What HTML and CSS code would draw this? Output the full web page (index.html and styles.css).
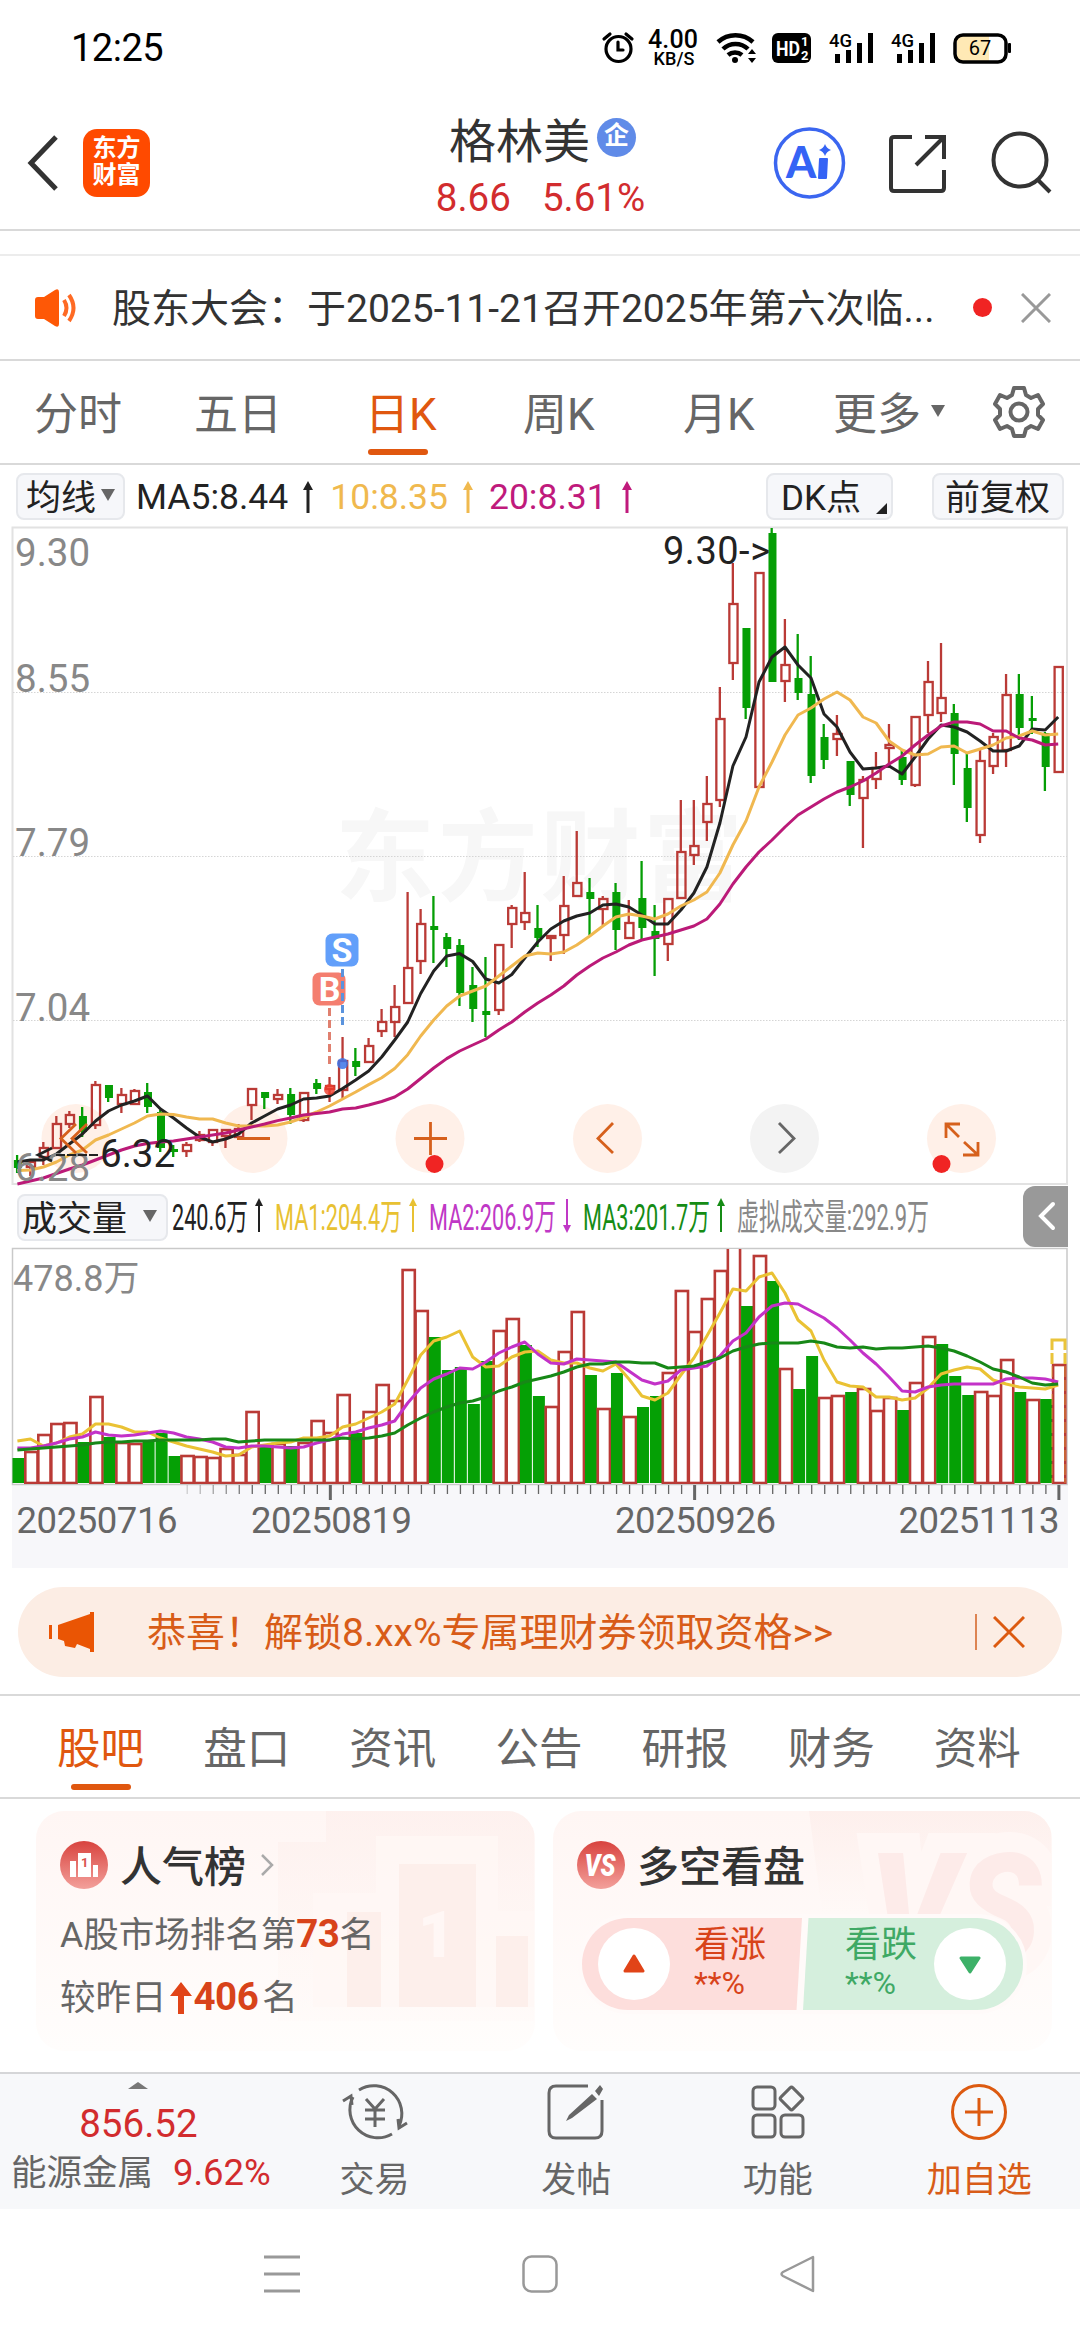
FILE: index.html
```html
<!DOCTYPE html>
<html lang="zh-CN">
<head>
  <meta charset="UTF-8" />
  <meta name="viewport" content="width=device-width, initial-scale=1.0" />
  <title>格林美 - 东方财富</title>
  <link rel="stylesheet" href="styles.css">
</head>
<body>
  <div class="status-bar">
    <span class="clock">12:25</span>
    <svg class="status-icons" width="420" height="50" viewBox="596 24 420 50">
      <g fill="none" stroke="#000" stroke-width="3.2" stroke-linecap="round">
        <circle cx="618.500" cy="49" r="12.5"/>
        <path d="M618 42v8h5M604 39l6-5M632 39l-6-5"/>
      </g>
      <text x="673" y="48" font-size="25" font-weight="500" text-anchor="middle" textLength="50">4.00</text>
      <text x="674" y="65" font-size="18" font-weight="500" text-anchor="middle" textLength="41">KB/S</text>
      <g fill="none" stroke="#000" stroke-width="4.5">
        <path d="M718 42a26 26 0 0 1 35 0M723 49a18 18 0 0 1 25 0M728 55a11 11 0 0 1 14 0"/>
      </g>
      <circle cx="735" cy="60" r="3"/>
      <path d="M748 54l4-5 4 5zM748 58l4 5 4-5z"/>
      <rect x="772" y="33" width="39" height="30" rx="6"/>
      <text x="776" y="56" font-size="21" font-weight="700" fill="#fff" textLength="24" lengthAdjust="spacingAndGlyphs">HD</text>
      <text x="801" y="46" font-size="13" font-weight="700" fill="#fff">1</text>
      <text x="801" y="60" font-size="13" font-weight="700" fill="#fff">2</text>
      <text x="829" y="47" font-size="18" font-weight="500" textLength="23" lengthAdjust="spacingAndGlyphs">4G</text>
      <path d="M835 54h5v9h-5zM846 50h5v13h-5zM857 43h5v20h-5zM868 33h5v30h-5z"/>
      <text x="891" y="47" font-size="18" font-weight="500" textLength="23" lengthAdjust="spacingAndGlyphs">4G</text>
      <path d="M897 54h5v9h-5zM908 50h5v13h-5zM919 43h5v20h-5zM930 33h5v30h-5z"/>
      <path d="M957 36h32v25h-32z" fill="#ffe9b5"/>
      <rect x="955" y="35" width="51" height="27" rx="8" fill="none" stroke="#000" stroke-width="3.5"/>
      <rect x="1008" y="43" width="3" height="10" rx="1"/>
      <text x="980" y="55" font-size="20" text-anchor="middle">67</text>
    </svg>
  </div>

  <header class="header">
    <svg class="back" width="34" height="58" viewBox="0 0 34 58"><path d="M30 3L5 29l25 26" fill="none" stroke="#333" stroke-width="5"/></svg>
    <div class="logo">东方<br>财富</div>
    <div class="stock">
      <div class="stock-name">格林美<span class="badge">企</span></div>
      <div class="stock-price"><span>8.66</span><span>5.61%</span></div>
    </div>
    <svg class="header-icons" width="290" height="80" viewBox="768 123 290 80">
      <circle cx="808.500" cy="163" r="34" fill="none" stroke="#3b66f0" stroke-width="3.500"/>
      <text x="785" y="178" font-family="Lato" font-size="43" font-weight="900" fill="#3563f5">A</text>
      <path d="M819 159h7l-1 19h-7z" fill="#3563f5" stroke="#3563f5" stroke-width="2" stroke-linejoin="round"/>
      <path d="M824 144q1.500 4.500 6 6q-4.500 1.500 -6 6q-1.500 -4.500 -6 -6q4.500 -1.500 6 -6z" fill="#3563f5"/>
      <g fill="none" stroke="#333" stroke-width="4">
        <path d="M911 137h-18q-3 0-3 3v48q0 3 3 3h47q3 0 3-3v-18M924 137h19v22M943 137l-28 28"/>
        <circle cx="1019" cy="160" r="26.500"/>
        <path d="M1037 180l12 12"/>
      </g>
    </svg>
  </header>
  <div class="scrolled-strip"></div>

  <div class="notice">
    <svg width="48" height="40" viewBox="0 0 48 40">
      <path d="M2 12q0-3 3-3h6L22 2q4-2 4 2v32q0 4-4 2L11 31H5q-3 0-3-3z" fill="#fe5806"/>
      <path d="M31 12q5 8 0 16M36 7q9 13 0 26" fill="none" stroke="#fe6a24" stroke-width="4"/>
    </svg>
    <span class="notice-text">股东大会：于2025-11-21召开2025年第六次临...</span>
    <i class="dot"></i>
    <svg class="notice-close" width="30" height="30" viewBox="0 0 30 30"><path d="M1 1l28 28M29 1L1 29" stroke="#999" stroke-width="3"/></svg>
  </div>

  <nav class="period-tabs">
    <span>分时</span>
    <span>五日</span>
    <span class="active">日K</span>
    <span>周K</span>
    <span>月K</span>
    <span>更多<i class="caret"></i></span>
    <svg width="54" height="54" viewBox="-27 -27 54 54">
      <path d="M-5-24H5L7-17L12-14L19-17L24-8L19-3V3L24 8L19 17L12 14L7 17L5 24H-5L-7 17L-12 14L-19 17L-24 8L-19 3V-3L-24-8L-19-17L-12-14L-7-17Z" fill="none" stroke="#666" stroke-width="4" stroke-linejoin="round"/>
      <circle r="8.500" fill="none" stroke="#666" stroke-width="4"/>
    </svg>
  </nav>

  <div class="ma-row">
    <span class="chip chip-ma">均线<i class="caret"></i></span>
    <span class="ma ma5">MA5:8.44</span>
    <svg class="arrow ma5" width="12" height="32" viewBox="0 0 12 32"><path d="M6 0l5 9H7.500v23h-3V9H1z"/></svg>
    <span class="ma ma10">10:8.35</span>
    <svg class="arrow ma10" width="12" height="32" viewBox="0 0 12 32"><path d="M6 0l5 9H7.500v23h-3V9H1z"/></svg>
    <span class="ma ma20">20:8.31</span>
    <svg class="arrow ma20" width="12" height="32" viewBox="0 0 12 32"><path d="M6 0l5 9H7.500v23h-3V9H1z"/></svg>
    <span class="chip chip-dk">DK点<i class="corner"></i></span>
    <span class="chip chip-fq">前复权</span>
  </div>

  <svg id="kline" class="kline" width="1080" height="665" viewBox="0 525 1080 665"></svg>

  <div class="volume-head">
    <span class="chip chip-vol">成交量<i class="caret"></i></span>
    <svg class="volume-legend" width="770" height="50" viewBox="170 1192 770 50">
      <g font-size="36">
        <text x="172" y="1230" fill="#222" textLength="76" lengthAdjust="spacingAndGlyphs">240.6万</text>
        <text x="275" y="1230" fill="#e8c132" textLength="127" lengthAdjust="spacingAndGlyphs">MA1:204.4万</text>
        <text x="429" y="1230" fill="#c038c6" textLength="127" lengthAdjust="spacingAndGlyphs">MA2:206.9万</text>
        <text x="583" y="1230" fill="#158c15" textLength="127" lengthAdjust="spacingAndGlyphs">MA3:201.7万</text>
        <text x="737" y="1230" fill="#888" textLength="192" lengthAdjust="spacingAndGlyphs">虚拟成交量:292.9万</text>
      </g>
      <path d="M259 1198l4 8h-3v26h-2v-26h-3z" fill="#222"/>
      <path d="M413 1198l4 8h-3v26h-2v-26h-3z" fill="#e8c132"/>
      <path d="M567 1233l4-8h-3v-26h-2v26h-3z" fill="#c038c6"/>
      <path d="M721 1198l4 8h-3v26h-2v-26h-3z" fill="#158c15"/>
    </svg>
    <span class="collapse"><svg width="18" height="30" viewBox="0 0 18 30"><path d="M15 3L3 15l12 12" fill="none" stroke="#fff" stroke-width="4" stroke-linecap="round"/></svg></span>
  </div>

  <svg id="volume" class="volume" width="1080" height="322" viewBox="0 1247 1080 322"></svg>

  <div class="promo">
    <svg width="48" height="40" viewBox="0 0 48 40"><path d="M1 13h3v14H1zM10 13L42 2V0h4v40h-4v-3L29 32l-2 4-10-2-1-5-6-2z" fill="#ea5504"/></svg>
    <span class="promo-text">恭喜！解锁8.xx%专属理财券领取资格&gt;&gt;</span>
    <i class="promo-line"></i>
    <svg width="32" height="32" viewBox="0 0 32 32"><path d="M1 1l30 30M31 1L1 31" stroke="#dc5a10" stroke-width="3"/></svg>
  </div>

  <nav class="info-tabs">
    <span class="active">股吧</span>
    <span>盘口</span>
    <span>资讯</span>
    <span>公告</span>
    <span>研报</span>
    <span>财务</span>
    <span>资料</span>
  </nav>

  <div class="cards">
    <div class="card">
      <svg class="card-bg" width="498" height="240" viewBox="0 0 498 240">
        <defs>
          <linearGradient id="fade" x1="0" y1="0" x2="0" y2="1">
            <stop offset="0" stop-color="#fdeeeb"/><stop offset="1" stop-color="#fffaf8"/>
          </linearGradient>
          <linearGradient id="ball" x1="0" y1="0" x2="0" y2="1">
            <stop offset="0" stop-color="#d8433e"/><stop offset="1" stop-color="#f3a09b"/>
          </linearGradient>
        </defs>
        <path d="M290 0H498V210H242V31H290Z" fill="url(#fade)" opacity=".6"/>
        <path d="M340 25H462V100H498V196H277V82H340Z" fill="#fff8f5" opacity=".8"/>
        <path d="M363 53H440V196H363ZM311 101H345V196H311ZM460 125H492V196H460Z" fill="#fcece9" opacity=".8"/>
        <text x="382" y="146" font-size="64" font-weight="900" fill="#fff7f5">1</text>
      </svg>
      <div class="card-title">
        <svg width="48" height="48" viewBox="0 0 48 48">
          <circle cx="24" cy="24" r="24" fill="url(#ball)"/>
          <path d="M10 20h6v16h-6zM18 12h13v24H18zM33 24h5v12h-5z" fill="#fff"/>
          <text x="21" y="26" font-size="13" font-weight="700" fill="#d9534f">1</text>
        </svg>
        <b>人气榜</b>
        <svg class="more" width="14" height="24" viewBox="0 0 14 24"><path d="M2 2l10 10L2 22" fill="none" stroke="#aaa" stroke-width="2.500"/></svg>
      </div>
      <p class="rank">A股市场排名第<em>73</em>名</p>
      <p class="rank rank-diff">较昨日<svg width="24" height="34" viewBox="0 0 24 34"><path d="M12 1l11 14h-8v18H9V15H1z" fill="#e14418"/></svg><em>406</em><span>名</span></p>
    </div>
    <div class="card">
      <svg class="card-bg" width="498" height="240" viewBox="0 0 498 240">
        <path d="M256 0H498V110H270Z" fill="url(#fade)" opacity=".8"/>
        <text x="316" y="150" font-size="152" font-weight="900" font-style="italic" textLength="172" lengthAdjust="spacingAndGlyphs" fill="#fdebe9" stroke="#fff7f5" stroke-width="40" paint-order="stroke">VS</text>
      </svg>
      <div class="card-title">
        <svg width="48" height="48" viewBox="0 0 48 48">
          <circle cx="24" cy="24" r="24" fill="url(#ball)"/>
          <text x="23" y="35" font-size="31" font-weight="900" font-style="italic" text-anchor="middle" textLength="31" lengthAdjust="spacingAndGlyphs" fill="#fff">VS</text>
        </svg>
        <b>多空看盘</b>
      </div>
      <div class="vote">
        <div class="vote-up">
          <span class="knob"><svg width="24" height="20" viewBox="0 0 24 20"><path d="M12 2l9 15H3z" fill="#e14418" stroke="#e14418" stroke-width="3" stroke-linejoin="round"/></svg></span>
          <span class="vote-text">看涨<small>**%</small></span>
        </div>
        <div class="vote-down">
          <span class="vote-text">看跌<small>**%</small></span>
          <span class="knob"><svg width="24" height="20" viewBox="0 0 24 20"><path d="M12 18l9-14H3z" fill="#3db168" stroke="#3db168" stroke-width="3" stroke-linejoin="round"/></svg></span>
        </div>
      </div>
    </div>
  </div>

  <footer class="toolbar">
    <div class="sector">
      <i class="caret-up"></i>
      <span class="sector-index">856.52</span>
      <span class="sector-name">能源金属 <em>9.62%</em></span>
    </div>
    <div class="tool">
      <svg width="66" height="60" viewBox="-33 -30 66 60" fill="none" stroke="#666" stroke-width="3">
        <path d="M-16-22A28 28 0 0 1 24 14M17 22A28 28 0 0 1-22-15M-32-11l8-5 1 9M32 11l-8 5-1-9"/>
        <path d="M-9-13L0-3L9-13M0-3V15M-10-2H10M-10 7H10"/>
      </svg>
      <span>交易</span>
    </div>
    <div class="tool">
      <svg width="60" height="60" viewBox="-30 -30 60 60">
        <path d="M12-26H-20q-7 0-7 7V19q0 7 7 7H19q7 0 7-7V-12" fill="none" stroke="#666" stroke-width="3"/>
        <path d="M16-18l5 5L-4 6l-6 3 3-6zM19-21l5-6 3 4-4 7z" fill="#666"/>
      </svg>
      <span>发帖</span>
    </div>
    <div class="tool">
      <svg width="60" height="60" viewBox="-30 -30 60 60" fill="none" stroke="#666" stroke-width="3">
        <rect x="-25" y="-25" width="22" height="22" rx="4"/>
        <rect x="-25" y="3" width="22" height="22" rx="4"/>
        <rect x="3" y="3" width="22" height="22" rx="4"/>
        <rect x="5" y="-22" width="17" height="17" rx="2" transform="rotate(45 13.500 -13.500)"/>
      </svg>
      <span>功能</span>
    </div>
    <div class="tool tool-add">
      <svg width="60" height="60" viewBox="-30 -30 60 60" fill="none" stroke="#dc5a10" stroke-width="3">
        <circle r="26.500"/><path d="M-14 0H14M0-14V14"/>
      </svg>
      <span>加自选</span>
    </div>
  </footer>

  <div class="system-nav">
    <svg width="36" height="38" viewBox="0 0 36 38"><path d="M0 2h36M0 19h36M0 36h36" stroke="#999" stroke-width="3"/></svg>
    <svg width="36" height="38" viewBox="0 0 36 38"><rect x="1.500" y="1.500" width="33" height="35" rx="8" fill="none" stroke="#999" stroke-width="2.500"/></svg>
    <svg width="36" height="38" viewBox="0 0 36 38"><path d="M33 2v34L3 21q-3-2 0-4z" fill="none" stroke="#999" stroke-width="2.500" stroke-linejoin="round"/></svg>
  </div>

  <script src="chart.js"></script>
</body>
</html>
```
FILE: styles.css
```css
* {
  margin: 0;
  padding: 0;
  box-sizing: border-box;
}

body {
  width: 1080px;
  height: 2340px;
  overflow: hidden;
  background: #fff;
  color: #333;
  font-family: Roboto, 'Noto Sans CJK SC', sans-serif;
  white-space: nowrap;
}

svg {
  display: block;
  flex-shrink: 0;
}

i, em {
  font-style: normal;
}

.status-bar {
  display: flex;
  justify-content: space-between;
  height: 96px;
  padding: 24px 64px 0 71px;
}

.clock {
  font-size: 38px;
  line-height: 49px;
  color: #000;
  letter-spacing: -0.5px;
}

/* header */
.header {
  display: flex;
  align-items: center;
  height: 135px;
  padding-left: 26px;
  border-bottom: 2px solid #d9d9d9;
}

.logo {
  width: 67px;
  height: 68px;
  margin-left: 23px;
  padding-top: 6px;
  border-radius: 14px;
  background: #ff4a00;
  color: #fff;
  font-size: 24px;
  font-weight: 700;
  line-height: 27px;
  text-align: center;
}

.stock {
  width: 457px;
  margin-left: 162px;
  text-align: center;
}

.stock-name {
  display: flex;
  align-items: center;
  justify-content: center;
  gap: 7px;
  height: 62px;
  margin-top: 2px;
  padding-left: 4px;
  font-size: 47px;
}

.badge {
  width: 39px;
  height: 39px;
  border-radius: 50%;
  background: #608be8;
  color: #fff;
  font-size: 25px;
  font-weight: 700;
  line-height: 36px;
}

.stock-price {
  display: flex;
  justify-content: center;
  gap: 31px;
  height: 52px;
  color: #d22c2e;
  font-size: 38.5px;
  line-height: 58px;
}

.scrolled-strip {
  height: 25px;
  border-bottom: 2px solid #ececec;
}

/* notice */
.notice {
  display: flex;
  align-items: center;
  height: 105px;
  padding-left: 33px;
  border-bottom: 2px solid #d9d9d9;
}

.notice-text {
  width: 861px;
  margin-left: 31px;
  padding-bottom: 6px;
  font-size: 39px;
}

.dot {
  width: 19px;
  height: 19px;
  border-radius: 50%;
  background: #f02423;
}

.notice-close {
  margin-left: 29px;
}

/* period tabs */
.period-tabs {
  display: flex;
  align-items: center;
  height: 104px;
  border-bottom: 2px solid #d9d9d9;
  color: #666;
  font-size: 44px;
}

.period-tabs span {
  position: relative;
  width: 160px;
  padding-left: 34px;
  padding-bottom: 2px;
}

.period-tabs span:nth-child(3) {
  padding-left: 45px;
}

.period-tabs span:nth-child(4) {
  padding-left: 43px;
}

.period-tabs span:nth-child(5) {
  padding-left: 43px;
}

.period-tabs span:nth-child(6) {
  display: flex;
  align-items: center;
  width: 192px;
  padding-left: 33px;
}

.period-tabs .active, .info-tabs .active {
  color: #e0570f;
}

.period-tabs .active::after, .info-tabs .active::after {
  content: '';
  position: absolute;
  left: 48px;
  bottom: -10px;
  width: 60px;
  height: 6px;
  border-radius: 3px;
  background: #e0570f;
}

.caret {
  display: inline-block;
  margin-left: 10px;
  border: 7px solid transparent;
  border-top: 12px solid #666;
  border-bottom: 0;
}

/* chart legends */
.ma-row {
  display: flex;
  align-items: center;
  height: 60px;
  padding: 3px 16px 0;
}

.chip {
  display: flex;
  align-items: center;
  height: 47px;
  padding-bottom: 4px;
  border: 2px solid #e6e8ec;
  border-radius: 8px;
  background: #f6f7fa;
  color: #222;
  font-size: 35px;
}

.chip-ma {
  width: 109px;
  padding-left: 8px;
}

.chip .caret {
  margin-left: 5px;
}

.ma {
  font-size: 35.5px;
}

.ma5 {
  margin-left: 11px;
  color: #222;
  fill: #222;
}

.ma10 {
  margin-left: 16px;
  color: #f0b94e;
  fill: #f0b94e;
}

.ma20 {
  margin-left: 15px;
  color: #c01a7c;
  fill: #c01a7c;
}

.arrow.arrow {
  margin-left: 14px;
}

.chip-dk {
  position: relative;
  width: 127px;
  margin-left: auto;
  padding-left: 13px;
}

.corner {
  position: absolute;
  right: 4px;
  bottom: 4px;
  border-left: 11px solid transparent;
  border-bottom: 11px solid #222;
}

.chip-fq {
  width: 132px;
  margin-left: 39px;
  padding-left: 11px;
}

.kline text, .volume text {
  font-family: Roboto, 'Noto Sans CJK SC', sans-serif;
}

.volume-head {
  display: flex;
  align-items: center;
  height: 57px;
  padding-left: 17px;
}

.chip-vol {
  width: 151px;
  margin-top: -2px;
  padding-left: 3px;
}

.chip-vol .caret {
  margin-left: 16px;
}

.volume-legend {
  margin-left: 2px;
  margin-top: -4px;
}

.collapse {
  width: 45px;
  height: 61px;
  margin-left: 83px;
  margin-top: -4px;
  padding: 15px 0 0 15px;
  border-radius: 12px 0 0 12px;
  background: #999;
}

/* promo */
.promo {
  display: flex;
  align-items: center;
  height: 90px;
  margin: 18px 18px 17px;
  padding-left: 30px;
  border-radius: 45px;
  background: #fcede4;
  color: #d85c18;
  font-size: 39px;
}

.promo-text {
  width: 828px;
  margin-left: 51px;
  padding-bottom: 6px;
}

.promo-line {
  width: 2px;
  height: 36px;
  margin-right: 16px;
  background: #dd8452;
}

/* info tabs */
.info-tabs {
  display: flex;
  align-items: center;
  height: 105px;
  padding-left: 57px;
  border-top: 2px solid #d9d9d9;
  border-bottom: 2px solid #d9d9d9;
  color: #666;
  font-size: 43.5px;
}

.info-tabs span {
  position: relative;
  width: 146.6px;
  padding-bottom: 2px;
}

.info-tabs .active::after {
  left: 14px;
  bottom: -11px;
}

/* cards */
.cards {
  display: flex;
  gap: 18px;
  height: 273px;
  padding: 12px 28px 0 36px;
}

.card {
  position: relative;
  width: 499px;
  height: 240px;
  padding: 26px 24px 0;
  border-radius: 28px;
  background: linear-gradient(#fff6f4, #fffdfc);
  overflow: hidden;
}

.card-bg {
  position: absolute;
  left: 0;
  top: 0;
}

.card-title, .rank, .vote {
  position: relative;
}

.card-title {
  display: flex;
  align-items: center;
  height: 56px;
}

.card-title b {
  margin-left: 12px;
  padding-bottom: 4px;
  font-size: 42px;
  font-weight: 500;
}

.more {
  margin-left: 14px;
}

.rank {
  display: flex;
  align-items: center;
  height: 62px;
  margin-top: 7px;
  color: #666;
  font-size: 35.5px;
}

.rank em {
  padding-top: 4px;
  color: #d8431a;
  font-size: 38.5px;
  font-weight: 700;
  letter-spacing: -0.5px;
}

.rank-diff {
  margin-top: 1px;
}

.rank-diff svg {
  margin: 8px 1px 0 2px;
}

.rank-diff span {
  margin-left: 4px;
}

.vote {
  display: flex;
  gap: 1px;
  width: 449px;
  height: 100px;
  margin: 21px 0 0 1px;
  border: 4px solid #fffaf9;
  border-radius: 50px;
  background: #fffaf9;
  overflow: hidden;
}

.vote-up, .vote-down {
  display: flex;
  align-items: center;
  width: 220px;
}

.vote-up {
  padding-left: 16px;
  background: #fddedc;
  clip-path: polygon(0 0, 100% 0, 97.5% 100%, 0 100%);
  color: #d8431a;
}

.vote-down {
  padding-left: 42px;
  background: #d5efdd;
  clip-path: polygon(2.5% 0, 100% 0, 100% 100%, 0 100%);
  color: #3fa965;
}

.knob {
  display: flex;
  align-items: center;
  justify-content: center;
  width: 72px;
  height: 72px;
  border-radius: 50%;
  background: #fff;
}

.vote-text {
  display: flex;
  flex-direction: column;
  width: 72px;
  padding-bottom: 5px;
  font-size: 36px;
  line-height: 42px;
}

.vote-text small {
  font-size: 32px;
  line-height: 34px;
}

.vote-up .vote-text {
  margin-left: 24px;
}

.vote-down .knob {
  margin-left: 17px;
}

/* bottom toolbar */
.toolbar {
  display: flex;
  height: 137px;
  border-top: 2px solid #d5d6d8;
  background: #f7f8fa;
  color: #666;
}

.sector {
  display: flex;
  flex-direction: column;
  align-items: center;
  width: 274px;
  padding-top: 8px;
}

.caret-up {
  margin-left: 2px;
  border: 10px solid transparent;
  border-bottom: 7px solid #777;
  border-top: 0;
}

.sector-index {
  margin-top: 12px;
  margin-left: 3px;
  color: #d22c2e;
  font-size: 38.5px;
  line-height: 46px;
}

.sector-name {
  display: flex;
  gap: 20px;
  margin-top: 1px;
  margin-left: 8px;
  font-size: 35.5px;
  line-height: 50px;
}

.sector-name em {
  color: #d22c2e;
  font-size: 36.5px;
}

.tool {
  display: flex;
  flex-direction: column;
  align-items: center;
  width: 201.7px;
  padding-top: 8px;
  font-size: 35px;
  line-height: 50px;
}

.tool span {
  margin-top: 14px;
}

.tool-add {
  color: #d85c18;
}

.system-nav {
  display: flex;
  justify-content: center;
  gap: 222px;
  padding-top: 46px;
}
```
FILE: chart.js
```js
const NS = 'http://www.w3.org/2000/svg';
const RED = '#ba3a36';
const GREEN = '#059e05';
const START = 17.4;
const STEP = 13.01;

// type, high, body top, body bottom, low
const candles = [
  ['g',1155,1160,1168,1173],['r',1161,1162,1167,1176],['r',1142,1148,1157,1165],['r',1116,1124,1148,1149],['r',1111,1115,1124,1128],
  ['g',1107,1116,1132,1137],['r',1081,1085,1125,1129],['g',1085,1085,1098,1102],['r',1088,1095,1104,1113],['r',1089,1091,1104,1105],
  ['g',1083,1092,1107,1113],['g',1110,1112,1148,1152],['g',1145,1149,1151,1157],['r',1142,1145,1151,1157],['r',1131,1135,1140,1142],
  ['r',1130,1130,1142,1146],['r',1129,1130,1136,1148],['r',1124,1129,1137,1138],['r',1088,1089,1105,1120],['g',1092,1092,1098,1109],
  ['r',1089,1095,1099,1104],['g',1088,1094,1115,1124],['r',1092,1093,1120,1122],['g',1079,1083,1089,1094],['r',1077,1086,1089,1102],
  ['r',1037,1061,1090,1098],['g',1048,1061,1067,1076],['r',1038,1046,1062,1062],['r',1009,1022,1031,1037],['r',985,1007,1022,1037],
  ['r',892,968,1003,1003],['r',909,924,961,974],['g',896,926,930,963],['g',933,937,949,967],['g',939,945,993,1006],
  ['g',967,985,1009,1022],['g',957,1011,1015,1037],['r',944,945,1010,1015],['r',905,908,924,948],['r',872,913,922,930],
  ['g',905,928,938,947],['r',935,936,938,961],['r',876,906,935,954],['r',831,883,896,897],['g',878,892,899,935],
  ['r',896,899,909,925],['g',883,892,930,950],['r',900,923,938,939],['g',861,898,928,940],['g',905,931,939,976],
  ['r',898,899,944,961],['r',800,852,898,899],['r',800,846,855,865],['r',776,804,822,841],['r',687,719,800,807],
  ['r',563,604,663,680],['g',628,628,708,719],['r',572,573,787,787],['g',528,533,682,682],['r',619,665,681,702],
  ['g',634,678,693,700],['g',656,694,776,783],['g',724,737,760,769],['r',715,734,739,756],['g',761,761,795,806],
  ['r',776,780,798,848],['r',752,768,779,789],['r',724,745,748,768],['g',750,757,780,785],['r',716,717,785,787],
  ['r',661,682,715,733],['r',643,698,713,722],['g',704,713,754,785],['g',753,768,808,822],['r',750,761,835,843],
  ['r',733,737,766,774],['r',674,695,750,767],['g',674,694,728,740],['g',696,718,721,734],['g',732,733,767,791],['r',666,667,772,773]
];

const ma5 = [1162,1160,1160,1154,1144,1134,1121,1111,1105,1101,1096,1109,1118,1128,1137,1142,1139,1134,1123,1116,1109,1105,1099,1098,1096,1088.5,1080,1071,1057,1040,1022,993.5,971,956,953.6,961.5,979,983,974.5,958,942,929,921,916,913,905,904,907,915,924,924,910,893,867,823,766,737,682,657,647,665,678,714,727,752,769,768,766,774,757,739,725,727,732,741,751,751,746,729,730,717];
const ma10 = [1170.5,1170,1167,1162,1155,1150,1140,1135,1129,1123,1116,1114,1114.5,1117,1119,1119,1123,1126,1126,1126,1125,1122,1117.5,1112,1106,1099,1092,1084.6,1077.7,1068.6,1054.7,1036,1020,1006,996,991,986,976,966,956,953,954,952,945,936,926,917,914,916,919,914,906,900,892,873,845,821,787,762,735,715,708,699,692,700,717,723,741,750,755,754,747,746,753,749,745,738,736,731,735,734];
const ma20 = [1184,1181,1178,1173.5,1169,1165,1160,1155,1150,1146,1143.6,1142,1141,1139,1137,1135,1133,1130,1127,1124,1120.6,1118,1115,1113.5,1112,1109,1108,1105,1101.5,1097,1089,1078.5,1068,1058.6,1051,1045,1039,1030,1022,1012,1003,995,986,975,966,958,952,945,940,937,934,930,926,919,904,884,867,852,840,827,815,807,799,792,787,781,773,764,756,745,735,726,722,722,724,731,731,738,740,745,744];

const volTop = [1458,1452,1435,1424,1423,1442,1397,1437,1443,1444,1440,1433,1456,1456,1457,1458,1449,1455,1412,1447,1444,1446,1443,1421,1433,1395,1433,1412,1385,1401,1270,1311,1337,1370,1367,1404,1361,1331,1319,1345,1396,1407,1352,1312,1375,1409,1373,1417,1407,1396,1373,1291,1332,1299,1271,1240,1306,1256,1281,1369,1389,1356,1398,1396,1392,1389,1411,1398,1410,1383,1337,1344,1376,1395,1392,1396,1360,1392,1400,1399,1365];
const volType = 'grrrrgrgrrgggrrrrrrgrgrrrrgrrrrrgggggrrggrrrgrgrggrrrrrrgrgrggrrgrrrgrrgggrrrgrgr';
const vma1 = [1441,1439,1446,1443,1437,1434,1424,1424,1427,1432,1432,1438,1442,1446,1449,1452,1456,1455,1447,1445,1443,1442,1438,1438,1436,1427,1424,1418,1412,1404,1380,1355,1341,1337,1331,1357,1367,1366,1357,1352,1351,1360,1363,1363,1368,1371,1364,1379,1396,1400,1393,1375,1358,1336,1313,1289,1291,1277,1273,1293,1320,1331,1360,1382,1386,1387,1397,1397,1400,1398,1388,1374,1370,1367,1369,1380,1384,1387,1388,1389,1385];
const vma2 = [1448,1448,1446,1443,1439,1437,1432,1435,1436,1435,1433,1431,1433,1437,1439,1442,1447,1448,1446,1446,1447,1448,1447,1443,1440,1434,1432,1428,1425,1421,1403,1388,1379,1374,1368,1369,1362,1353,1347,1342,1354,1363,1364,1359,1360,1361,1362,1371,1380,1384,1381,1370,1368,1366,1356,1341,1333,1317,1306,1303,1304,1311,1318,1328,1340,1353,1364,1377,1391,1392,1387,1385,1384,1384,1384,1384,1379,1378,1378,1379,1382];
const vma3 = [1450,1449,1448,1447,1446,1445,1443,1442,1442,1441,1441,1440,1440,1440,1440,1439,1439,1442,1441,1440,1440,1440,1440,1440,1440,1438,1439,1438,1436,1433,1425,1418,1412,1407,1403,1401,1397,1391,1387,1382,1379,1376,1372,1367,1364,1364,1362,1362,1363,1363,1368,1367,1366,1362,1358,1351,1347,1344,1343,1343,1343,1341,1343,1347,1348,1347,1349,1348,1348,1347,1346,1348,1351,1356,1362,1369,1372,1377,1383,1385,1384];

function add(parent, name, attrs, text) {
  const el = document.createElementNS(NS, name);
  for (const key in attrs) el.setAttribute(key, attrs[key]);
  if (text) el.textContent = text;
  parent.appendChild(el);
  return el;
}

function xAt(i) {
  return START + i * STEP;
}

function drawLine(svg, values, color) {
  const points = values.map((y, i) => xAt(i).toFixed(1) + ',' + y).join(' ');
  add(svg, 'polyline', { points, fill: 'none', stroke: color, 'stroke-width': 3, 'stroke-linejoin': 'round' });
}

function drawKline() {
  const svg = document.getElementById('kline');
  add(svg, 'text', { x: 335, y: 893, 'font-size': 100, 'font-weight': 700, fill: '#f7f7f7', textLength: 408 }, '东方财富');
  add(svg, 'rect', { x: 12.5, y: 527.5, width: 1054.5, height: 656.5, fill: 'none', stroke: '#e2e2e2', 'stroke-width': 2 });
  [692.5, 856.5, 1020.5].forEach(y => {
    add(svg, 'path', { d: `M13 ${y}H1067`, stroke: '#d5d5d5', 'stroke-dasharray': '1.5 1.5' });
  });

  // floating buttons
  [76, 253, 430, 607.5, 784.5, 961.5].forEach((cx, i) => {
    add(svg, 'circle', { cx, cy: 1138.5, r: 34.5, fill: i === 4 ? '#f3f3f3' : '#fff0e8' });
  });

  candles.forEach(([type, high, top, bottom, low], i) => {
    const x = xAt(i);
    const color = type === 'r' ? RED : GREEN;
    if (type === 'g') {
      add(svg, 'path', { d: `M${x - 0.3} ${high}V${low}`, stroke: color, 'stroke-width': 2.3 });
      add(svg, 'rect', { x: x - 3.5, y: top, width: 8, height: Math.max(bottom - top, 3), fill: color });
    } else {
      add(svg, 'path', { d: `M${x - 0.1} ${high}V${top}M${x - 0.1} ${bottom}V${low}`, stroke: color, 'stroke-width': 2.3 });
      add(svg, 'rect', { x: x - 3.6, y: top, width: 8.2, height: Math.max(bottom - top, 1), fill: 'none', stroke: color, 'stroke-width': 2.3 });
    }
  });

  drawLine(svg, ma5, '#222');
  drawLine(svg, ma10, '#f0b850');
  drawLine(svg, ma20, '#bb1a78');

  [['9.30', 566], ['8.55', 692], ['7.79', 856], ['7.04', 1021], ['6.28', 1181]].forEach(([label, y]) => {
    add(svg, 'text', { x: 15, y, 'font-size': 38.5, fill: '#888' }, label);
  });
  add(svg, 'text', { x: 663, y: 564, 'font-size': 38, fill: '#222', textLength: 107 }, '9.30->');
  add(svg, 'text', { x: 100, y: 1167, 'font-size': 38.5, fill: '#222' }, '6.32');
  add(svg, 'path', { d: 'M52 1148L38 1155L52 1161', fill: 'none', stroke: '#222', 'stroke-width': 2.6 });
  add(svg, 'path', { d: 'M56 1155H98', stroke: '#222', 'stroke-width': 2.2, 'stroke-dasharray': '9 2' });

  // buy and sell markers
  add(svg, 'rect', { x: 312.5, y: 972.5, width: 33, height: 33, rx: 7, fill: '#f47e6f' });
  add(svg, 'text', { x: 329.5, y: 1001, 'font-size': 34, 'font-weight': 700, 'text-anchor': 'middle', fill: '#fff' }, 'B');
  add(svg, 'rect', { x: 325.5, y: 933.5, width: 33, height: 33, rx: 7, fill: '#629ffa' });
  add(svg, 'text', { x: 342, y: 962, 'font-size': 34, 'font-weight': 700, 'text-anchor': 'middle', fill: '#fff' }, 'S');
  add(svg, 'path', { d: 'M329.5 1008V1064', stroke: '#e0806f', 'stroke-width': 3, 'stroke-dasharray': '8 4' });
  add(svg, 'path', { d: 'M342.5 969V1025', stroke: '#5a93dd', 'stroke-width': 3, 'stroke-dasharray': '8 4' });
  add(svg, 'circle', { cx: 329.5, cy: 1089.5, r: 5.5, fill: '#f03c2c', opacity: 0.8 });
  add(svg, 'circle', { cx: 342.5, cy: 1063.5, r: 5.5, fill: '#3c74e8', opacity: 0.85 });

  add(svg, 'path', {
    d: 'M76 1124L61 1138.5L76 1153M87 1124L72 1138.5L87 1153M237 1138.5H270M414 1138.5H447M430.500 1122V1155M613 1123L598 1138.5L613 1153M946 1138V1124H960M946 1124L959 1137M978 1142V1155H963M978 1155L964 1142',
    fill: 'none', stroke: '#d6601c', 'stroke-width': 2.8
  });
  add(svg, 'path', { d: 'M779 1123L794 1138.5L779 1153', fill: 'none', stroke: '#666', 'stroke-width': 2.8 });
  add(svg, 'circle', { cx: 434.5, cy: 1164, r: 9, fill: '#f02423' });
  add(svg, 'circle', { cx: 941.5, cy: 1164, r: 9, fill: '#f02423' });
}

function drawVolume() {
  const svg = document.getElementById('volume');
  add(svg, 'rect', { x: 12, y: 1485, width: 1056, height: 83, fill: '#f7f7fa' });
  add(svg, 'rect', { x: 12.5, y: 1248.5, width: 1054.5, height: 236, fill: '#fff', stroke: '#c9c9c9', 'stroke-width': 1.5 });
  const clip = add(svg, 'clipPath', { id: 'volumeArea' });
  add(clip, 'rect', { x: 12, y: 1249, width: 1056, height: 235 });
  const area = add(svg, 'g', { 'clip-path': 'url(#volumeArea)' });

  volTop.forEach((y, i) => {
    const x = xAt(i) + 0.6;
    if (volType[i] === 'g') {
      add(area, 'rect', { x: x - 5.5, y, width: 12, height: 1483 - y, fill: '#05a005' });
    } else {
      add(area, 'rect', { x: x - 5.7, y, width: 12.2, height: 1483 - y, fill: '#fff', stroke: RED, 'stroke-width': 2.6 });
    }
  });

  // projected volume of the current day
  add(area, 'path', { d: 'M1052 1364V1353M1052 1350V1345V1340H1065V1350M1065 1353V1364', fill: 'none', stroke: '#eac43a', 'stroke-width': 3 });
  add(area, 'path', { d: 'M1052 1366V1483M1065 1366V1483', stroke: '#eac43a', 'stroke-width': 1.2, 'stroke-dasharray': '11 3', opacity: 0.5 });

  drawLine(area, vma1, '#eac234');
  drawLine(area, vma2, '#c332c8');
  drawLine(area, vma3, '#178817');

  for (let i = 13; i <= 80; i++) {
    const x = START + 0.7 + i * STEP;
    const major = i === 24 || i === 52 || i === 80;
    add(svg, 'path', {
      d: `M${x} 1485V${major ? 1500 : 1494}`,
      stroke: '#666',
      'stroke-width': major ? 3 : 1.3,
      opacity: i < 18 ? (i - 11) / 7 : 1
    });
  }

  add(svg, 'text', { x: 13, y: 1291, 'font-size': 36, fill: '#888' }, '478.8万');
  [['20250716', 16.5], ['20250819', 251], ['20250926', 615], ['20251113', 898.5]].forEach(([date, x]) => {
    add(svg, 'text', { x, y: 1533, 'font-size': 36.5, fill: '#666', textLength: 161 }, date);
  });
}

drawKline();
drawVolume();
```
